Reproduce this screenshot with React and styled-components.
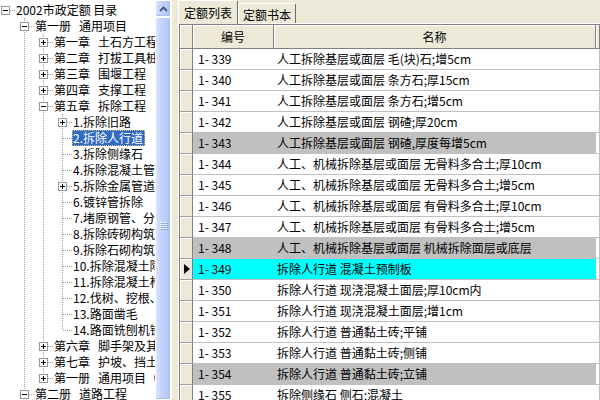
import React from "react";
import styled, { createGlobalStyle } from "styled-components";

const GlobalStyle = createGlobalStyle`
  html, body {
    margin: 0;
    padding: 0;
    background: #ece9d8;
  }
  body {
    font-family: "Noto Sans CJK SC", "Liberation Sans", sans-serif;
    font-size: 12px;
    color: #000;
  }
`;

const tree = [
  [0, "2002市政定额 目录", "-"],
  [1, "第一册  通用项目", "-"],
  [2, "第一章  土石方工程", "+"],
  [2, "第二章  打拔工具桩", "+"],
  [2, "第三章  围堰工程", "+"],
  [2, "第四章  支撑工程", "+"],
  [2, "第五章  拆除工程", "-"],
  [3, "1.拆除旧路", "+"],
  [3, "2.拆除人行道", null, true],
  [3, "3.拆除侧缘石"],
  [3, "4.拆除混凝土管道"],
  [3, "5.拆除金属管道", "+"],
  [3, "6.镀锌管拆除"],
  [3, "7.堵原钢管、分段"],
  [3, "8.拆除砖砌构筑物"],
  [3, "9.拆除石砌构筑物"],
  [3, "10.拆除混凝土障碍物"],
  [3, "11.拆除混凝土构筑物"],
  [3, "12.伐树、挖根、除草"],
  [3, "13.路面凿毛"],
  [3, "14.路面铣刨机铣刨"],
  [2, "第六章  脚手架及其他", "+"],
  [2, "第七章  护坡、挡土墙", "+"],
  [2, "第一册  通用项目（补充）", "+"],
  [1, "第二册  道路工程", "-"],
];

const rows = [
  ["1- 339", "人工拆除基层或面层 毛(块)石;增5cm"],
  ["1- 340", "人工拆除基层或面层 条方石;厚15cm"],
  ["1- 341", "人工拆除基层或面层 条方石;增5cm"],
  ["1- 342", "人工拆除基层或面层 钢碴;厚20cm"],
  ["1- 343", "人工拆除基层或面层 钢碴,厚度每增5cm", "gray"],
  ["1- 344", "人工、机械拆除基层或面层 无骨料多合土;厚10cm"],
  ["1- 345", "人工、机械拆除基层或面层 无骨料多合土;增5cm"],
  ["1- 346", "人工、机械拆除基层或面层 有骨料多合土;厚10cm"],
  ["1- 347", "人工、机械拆除基层或面层 有骨料多合土;增5cm"],
  ["1- 348", "人工、机械拆除基层或面层 机械拆除面层或底层", "gray"],
  ["1- 349", "拆除人行道 混凝土预制板", "current"],
  ["1- 350", "拆除人行道 现浇混凝土面层;厚10cm内"],
  ["1- 351", "拆除人行道 现浇混凝土面层;增1cm"],
  ["1- 352", "拆除人行道 普通黏土砖;平铺"],
  ["1- 353", "拆除人行道 普通黏土砖;侧铺"],
  ["1- 354", "拆除人行道 普通黏土砖;立铺", "gray"],
  ["1- 355", "拆除侧缘石 侧石;混凝土"],
];

const tones = {
  white: "#ffffff",
  gray: "#c0c0c0",
  current: "#00ffff",
};

// does node i have a later sibling before its parent's branch ends
const hasNext = (i) => {
  const level = tree[i][0];
  for (let j = i + 1; j < tree.length; j++) {
    if (tree[j][0] < level) return false;
    if (tree[j][0] === level) return true;
  }
  return false;
};

const ancestorAt = (i, k) => {
  for (let j = i - 1; j >= 0; j--) {
    if (tree[j][0] === k) return j;
  }
  return -1;
};

const dotsV = "repeating-linear-gradient(to bottom, #a0a0a0 0 1px, transparent 1px 2px)";
const dotsH = "repeating-linear-gradient(to right, #a0a0a0 0 1px, transparent 1px 2px)";

export default function App() {
  return (
    <Window>
      <GlobalStyle />
      <TreePane>
        {tree.map(([level, label, box, selected], i) => {
          const guides = [];
          for (let k = 0; k < level; k++) {
            const a = ancestorAt(i, k);
            guides.push(<Guide key={k} $line={a >= 0 && hasNext(a)} />);
          }
          const parts = label.split("  ");
          return (
            <TreeRow key={i}>
              {guides}
              <Connector $top={i > 0} $bottom={hasNext(i)}>
                {box && <ExpandBox $plus={box === "+"} />}
              </Connector>
              <Label $selected={selected}>
                {parts.map((p, n) => (
                  <React.Fragment key={n}>
                    {n > 0 && <Gap />}
                    {p}
                  </React.Fragment>
                ))}
              </Label>
            </TreeRow>
          );
        })}
      </TreePane>

      <ScrollBar>
        <ScrollButton>
          <svg width="9" height="6" viewBox="0 0 9 6">
            <polyline points="1,5 4.5,1.5 8,5" fill="none" stroke="#4d6185" strokeWidth="2" />
          </svg>
        </ScrollButton>
        <Thumb>
          <Grip>
            <span />
            <span />
            <span />
            <span />
          </Grip>
        </Thumb>
      </ScrollBar>

      <Splitter />

      <RightPane>
        <TabStrip>
          <Tab $active>定额列表</Tab>
          <Tab>定额书本</Tab>
        </TabStrip>
        <TabPanel>
          <Grid>
            <HeaderRow>
              <HeaderCorner />
              <HeaderCell $w={80}>编号</HeaderCell>
              <HeaderCell $w={321}>名称</HeaderCell>
              <HeaderCell $fill />
            </HeaderRow>
            {rows.map(([code, name, tone = "white"]) => (
              <DataRow key={code}>
                <Indicator>{tone === "current" && <Arrow />}</Indicator>
                <Cell $w={80} $bg={tones[tone]} $pad={5}>
                  {code}
                </Cell>
                <Cell $w={321} $bg={tones[tone]} $pad={3}>
                  {name}
                </Cell>
                <Cell $fill $bg="#fff" />
              </DataRow>
            ))}
          </Grid>
        </TabPanel>
      </RightPane>
    </Window>
  );
}

const Window = styled.div`
  display: flex;
  width: 600px;
  height: 400px;
  overflow: hidden;
  background: #ece9d8;
`;

const TreePane = styled.div`
  width: 155px;
  flex: none;
  box-sizing: border-box;
  padding-top: 2px;
  background: #fff;
  overflow: hidden;
`;

const TreeRow = styled.div`
  display: flex;
  height: 16px;
  margin-left: -4px;
  white-space: nowrap;
  line-height: 16px;
`;

const Guide = styled.span`
  flex: none;
  width: 19px;
  height: 16px;
  background: ${(p) => (p.$line ? `${dotsV} 9px 0 / 1px 16px no-repeat` : "none")};
`;

const Connector = styled.span`
  position: relative;
  flex: none;
  width: 19px;
  height: 16px;
  background: ${(p) =>
    [
      `${dotsH} 10px 8px / 9px 1px no-repeat`,
      p.$top ? `${dotsV} 9px 0 / 1px 8px no-repeat` : null,
      p.$bottom ? `${dotsV} 9px 8px / 1px 8px no-repeat` : null,
    ]
      .filter(Boolean)
      .join(", ")};
`;

const ExpandBox = styled.span`
  position: absolute;
  left: 5px;
  top: 4px;
  width: 7px;
  height: 7px;
  border: 1px solid #919b9c;
  background: #fff;

  &::before {
    content: "";
    position: absolute;
    left: 1px;
    top: 3px;
    width: 5px;
    height: 1px;
    background: #000;
  }
  &::after {
    content: "";
    display: ${(p) => (p.$plus ? "block" : "none")};
    position: absolute;
    left: 3px;
    top: 1px;
    width: 1px;
    height: 5px;
    background: #000;
  }
`;

const Label = styled.span`
  display: inline-block;
  height: 16px;
  padding: 0 2px 0 1px;
  box-sizing: border-box;
  background: ${(p) => (p.$selected ? "#316ac5" : "transparent")};
  color: ${(p) => (p.$selected ? "#fff" : "#000")};
  outline: ${(p) => (p.$selected ? "1px dotted #e0c070" : "none")};
  outline-offset: -1px;
`;

const Gap = styled.span`
  display: inline-block;
  width: 8px;
`;

const ScrollBar = styled.div`
  width: 16px;
  flex: none;
  display: flex;
  flex-direction: column;
  background: #fdfdfb;
`;

const blueFace = `
  background: linear-gradient(to right, #dbe5fd 0%, #c6d5fb 30%, #bccdf8 70%, #b0c4f3 100%);
  border: 1px solid #fff;
  border-radius: 2px;
  box-shadow: inset -1px -1px 0 #a9bdee;
`;

const ScrollButton = styled.div`
  height: 15px;
  display: flex;
  align-items: center;
  justify-content: center;
  ${blueFace}
`;

const Thumb = styled.div`
  flex: 1;
  ${blueFace}
  border-radius: 2px 2px 0 0;
`;

const Grip = styled.div`
  display: flex;
  flex-direction: column;
  align-items: center;
  gap: 1px;
  margin-top: 204px;

  span {
    width: 7px;
    height: 1px;
    background: #eef4fe;
    box-shadow: 1px 1px 0 #8cabe8;
  }
`;

const Splitter = styled.div`
  width: 7px;
  flex: none;
  box-sizing: border-box;
  border-left: 1px solid #fff;
  background: #ece9d8;
`;

const RightPane = styled.div`
  flex: 1;
  min-width: 0;
  display: flex;
  flex-direction: column;
`;

const TabStrip = styled.div`
  display: flex;
  align-items: flex-end;
  height: 23px;
  flex: none;
  position: relative;
  z-index: 1;
`;

const Tab = styled.div`
  box-sizing: border-box;
  height: ${(p) => (p.$active ? "24px" : "20px")};
  margin-bottom: ${(p) => (p.$active ? "-1px" : "0")};
  padding: ${(p) => (p.$active ? "3px 5px 0" : "2px 4px 0")};
  border: 1px solid;
  border-color: #fff #716f64 transparent #fff;
  border-bottom: none;
  border-radius: 2px 2px 0 0;
  background: #ece9d8;
  line-height: 17px;
  white-space: nowrap;
`;

const TabPanel = styled.div`
  flex: 1;
  min-height: 0;
  border-top: 1px solid #fff;
  border-left: 1px solid #fff;
`;

const Grid = styled.div`
  height: 100%;
  border-top: 1px solid #808080;
  border-left: 1px solid #808080;
  background: #fff;
  overflow: hidden;
`;

const HeaderRow = styled.div`
  display: flex;
  height: 24px;
  box-sizing: border-box;
  border-bottom: 1px solid #808080;
  background: #ece9d8;
`;

const HeaderCorner = styled.div`
  width: 12px;
  flex: none;
  border-right: 1px solid #808080;
  box-shadow: inset 1px 1px 0 #fff;
`;

const HeaderCell = styled.div`
  width: ${(p) => (p.$fill ? "auto" : `${p.$w}px`)};
  flex: ${(p) => (p.$fill ? "1" : "none")};
  border-right: 1px solid #808080;
  box-shadow: inset 1px 1px 0 #fff;
  text-align: center;
  line-height: 23px;
`;

const DataRow = styled.div`
  display: flex;
  height: 21px;
`;

const Indicator = styled.div`
  position: relative;
  width: 12px;
  flex: none;
  box-sizing: border-box;
  border-right: 1px solid #808080;
  border-bottom: 1px solid #a0a0a0;
  box-shadow: inset 1px 1px 0 #fff;
  background: #ece9d8;
  width: 13px;
  display: flex;
  align-items: center;
  justify-content: center;
`;

const Arrow = styled.span`
  width: 0;
  height: 0;
  border-left: 6px solid #000;
  border-top: 5px solid transparent;
  border-bottom: 5px solid transparent;
  margin-left: 1px;
`;

const Cell = styled.div`
  width: ${(p) => (p.$fill ? "auto" : `${p.$w}px`)};
  flex: ${(p) => (p.$fill ? "1" : "none")};
  box-sizing: content-box;
  padding-left: ${(p) => p.$pad || 0}px;
  margin-right: ${(p) => -(p.$pad || 0)}px;
  border-right: 1px solid #c0c0c0;
  border-bottom: 1px solid #c0c0c0;
  background: ${(p) => p.$bg};
  line-height: 20px;
  white-space: nowrap;
  overflow: hidden;
`;
